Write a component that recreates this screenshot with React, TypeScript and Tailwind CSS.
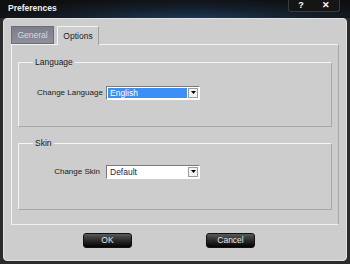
import React from 'react';

const font = { fontFamily: '"Liberation Sans", Arial, sans-serif' };

function Select({ value, selected }: { value: string; selected?: boolean }) {
  return (
    <div className="flex h-[14px] w-[94px] items-stretch border border-t-[#7a7a7a] border-l-[#7a7a7a] border-r-white border-b-white bg-white p-px">
      <div
        className={`flex flex-1 items-center pl-[2px] text-[8.5px] leading-none ${
          selected ? 'bg-[#3d8ef5] text-white' : 'bg-white text-[#2a1a4a]'
        }`}
      >
        {value}
      </div>
      <div className="ml-px flex w-[10px] items-center justify-center border border-[#9a9a9a] bg-[#f2f2f2]">
        <svg width="5" height="4" viewBox="0 0 5 4">
          <path d="M0 0h5L2.5 3z" fill="#000" />
        </svg>
      </div>
    </div>
  );
}

function GroupBox({ title, children, className }: { title: string; children: React.ReactNode; className?: string }) {
  return (
    <div className={`relative rounded-[1px] border border-t-[#f4f4f4] border-l-[#f4f4f4] border-r-[#a8a8a8] border-b-[#a8a8a8] ${className ?? ''}`}>
      <span className="absolute -top-[6px] left-[14px] bg-[#cdcdcd] px-[2px] text-[8.5px] leading-[11px] text-[#1a1a1a]">
        {title}
      </span>
      {children}
    </div>
  );
}

function DarkButton({ label }: { label: string }) {
  return (
    <button className="flex h-[15px] w-[49px] items-center justify-center rounded-[3px] border border-[#111] bg-gradient-to-b from-[#5a5a5a] via-[#2a2a2a] to-[#050505] text-[8.5px] leading-none text-[#e8e8e8]">
      {label}
    </button>
  );
}

export default function App() {
  return (
    <div className="relative h-[264px] w-[350px] overflow-hidden bg-[#2b2b2b]" style={font}>
      {/* title bar */}
      <div className="relative h-[18px] bg-[radial-gradient(ellipse_at_55%_130%,#1f4468_0%,#15202c_45%,#0f0f10_80%)]">
        <span className="absolute left-[8px] top-[3px] text-[8.5px] font-bold leading-[11px] text-[#f0f0f0]">
          Preferences
        </span>
        <div className="absolute right-[10px] top-0 flex h-[12px] w-[52px] items-center justify-around rounded-b-[3px] border border-t-0 border-[#3a3a3a] bg-[#151515] text-[9px] font-bold leading-none text-white">
          <span>?</span>
          <span>✕</span>
        </div>
      </div>

      {/* body */}
      <div className="mx-[3px] h-[243px] rounded-[4px] border border-[#e2e2e2] bg-[#cdcdcd] px-[7px] pt-[7px]">
        <div className="flex items-end gap-[3px]">
          <div className="flex h-[18px] w-[43px] items-center justify-center border border-[#6e6e78] bg-gradient-to-b from-[#7d7d8a] to-[#8f8f9c] text-[8.5px] text-[#d8d8e0]">
            General
          </div>
          <div className="relative z-10 -mb-px flex h-[19px] w-[42px] items-center justify-center border border-b-0 border-t-[#f2f2f2] border-l-[#f2f2f2] border-r-[#a0a0a0] bg-[#cdcdcd] text-[8.5px] text-[#1a1a1a]">
            Options
          </div>
        </div>
        <div className="h-[181px] border border-t-[#f2f2f2] border-l-[#f2f2f2] border-r-[#a8a8a8] border-b-[#f0f0f0] px-[6px] pt-[17px]">
          <GroupBox title="Language" className="h-[65px]">
            <div className="flex items-center pt-[23px]">
              <span className="w-[87px] whitespace-nowrap pl-[18px] text-[8px] text-[#1a1a1a]">
                Change Language
              </span>
              <Select value="English" selected />
            </div>
          </GroupBox>
          <GroupBox title="Skin" className="mt-[16px] h-[67px]">
            <div className="flex items-center pt-[21px]">
              <span className="w-[87px] whitespace-nowrap pr-[6px] text-right text-[8px] text-[#1a1a1a]">
                Change Skin
              </span>
              <Select value="Default" />
            </div>
          </GroupBox>
        </div>
        <div className="flex pl-[72px] pt-[8px]">
          <DarkButton label="OK" />
          <div className="w-[74px]" />
          <DarkButton label="Cancel" />
        </div>
      </div>
    </div>
  );
}
